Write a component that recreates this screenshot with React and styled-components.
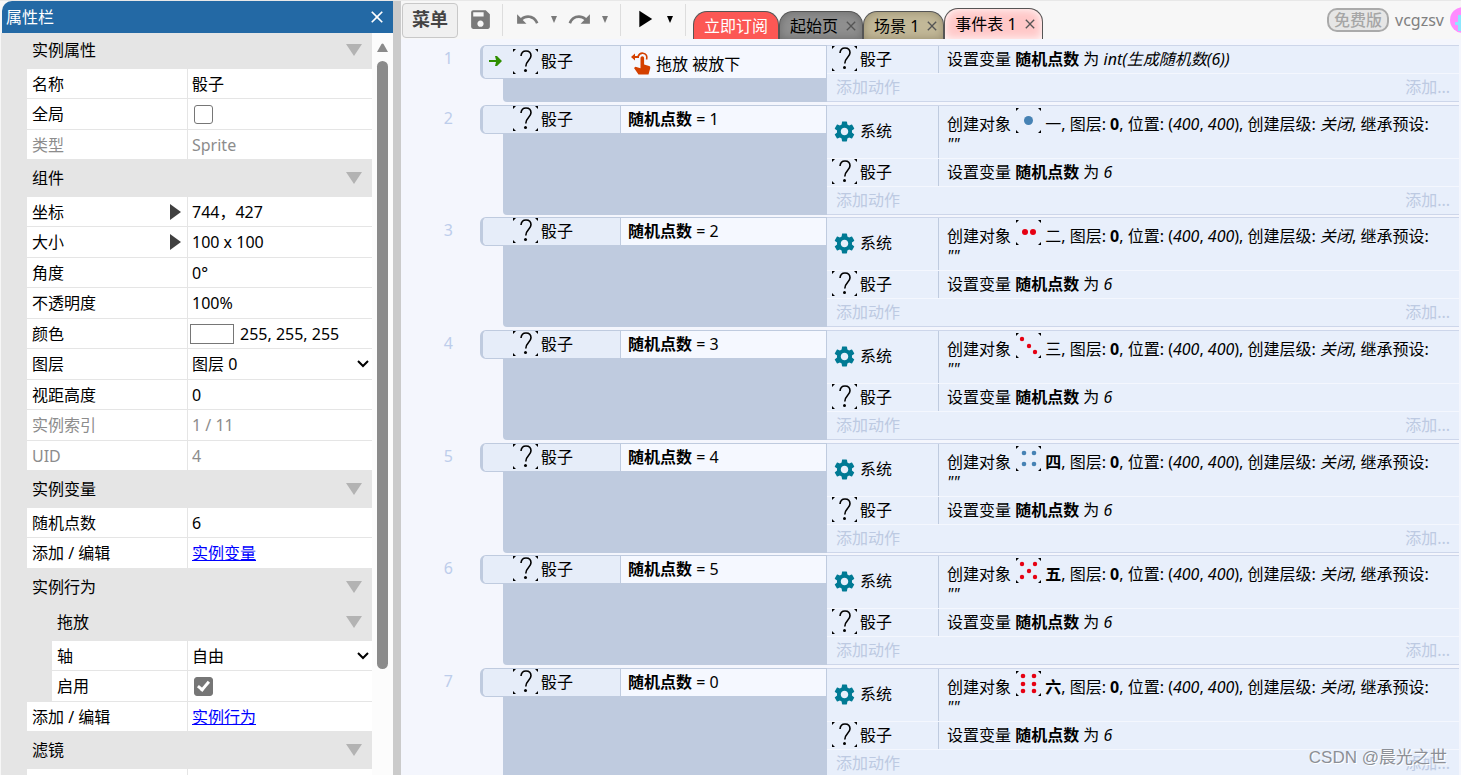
import React from 'react'
import styled, { createGlobalStyle } from 'styled-components'
import { MdClose, MdPlayArrow, MdRedo, MdSave, MdSettings, MdUndo } from 'react-icons/md'

const GlobalStyle = createGlobalStyle`
    * { box-sizing: border-box; }
    html, body, #root { height: 100%; }
    body {
        margin: 0;
        overflow: hidden;
        background: #f7f7f7;
        color: #000;
        font-family: "Noto Sans", "Noto Sans CJK SC", sans-serif;
        font-size: 16px;
        line-height: 20px;
    }
    button, input, select { font: inherit; color: inherit; }
`

const sections = [
    {
        title: '实例属性',
        rows: [
            { label: '名称', value: '骰子' },
            { label: '全局', type: 'check' },
            { label: '类型', value: 'Sprite', muted: true },
        ],
    },
    {
        title: '组件',
        rows: [
            { label: '坐标', value: '744，427', expand: true },
            { label: '大小', value: '100 x 100', expand: true },
            { label: '角度', value: '0°' },
            { label: '不透明度', value: '100%' },
            { label: '颜色', value: '255, 255, 255', type: 'color' },
            { label: '图层', value: '图层 0', type: 'select' },
            { label: '视距高度', value: '0' },
            { label: '实例索引', value: '1 / 11', muted: true },
            { label: 'UID', value: '4', muted: true },
        ],
    },
    {
        title: '实例变量',
        rows: [
            { label: '随机点数', value: '6' },
            { label: '添加 / 编辑', value: '实例变量', type: 'link' },
        ],
    },
    {
        title: '实例行为',
        sub: '拖放',
        rows: [
            { label: '轴', value: '自由', type: 'select', nested: true },
            { label: '启用', type: 'check', checked: true, nested: true },
            { label: '添加 / 编辑', value: '实例行为', type: 'link' },
        ],
    },
    {
        title: '滤镜',
        rows: [{ label: '', type: 'empty' }],
    },
]

const RED = '#e60012'
const BLUE = '#4682b4'

const faces = [
    { name: '一', color: BLUE, r: 4.5, dots: [[12.5, 12.5]] },
    { name: '二', color: RED, r: 3, dots: [[9, 12], [17, 12]] },
    { name: '三', color: RED, r: 2.2, dots: [[6, 6], [13, 13], [19, 19]] },
    { name: '四', color: BLUE, r: 2.3, bold: true, dots: [[8, 7], [18, 7], [8, 18], [18, 18]] },
    { name: '五', color: RED, r: 2.2, bold: true, dots: [[6, 6], [19, 6], [13, 13], [6, 19], [19, 19]] },
    { name: '六', color: RED, r: 2.3, bold: true, dots: [[7, 5], [18, 5], [7, 13], [18, 13], [7, 20], [18, 20]] },
]

/* ---------- icons ---------- */

function Corners() {
    return <path d="M0 0h3l-3 3zM25 0v3l-3-3zM0 25v-3l3 3zM25 25h-3l3-3z" fill="#000" />
}

function SpriteIcon() {
    return (
        <IconBox viewBox="0 0 25 25" aria-hidden="true">
            <Corners />
            <path d="M8 7C8.300 3.600 10.300 2 13 2c3 0 5 2 5 4.800 0 4.200-5.200 5-5.200 10.700" fill="none" stroke="#000" strokeWidth="1.600" />
            <circle cx="12.500" cy="21.500" r="1.500" />
        </IconBox>
    )
}

function FaceIcon({ face }) {
    return (
        <FaceBox viewBox="0 0 25 25" aria-hidden="true">
            <Corners />
            {face.dots.map(([x, y]) => (
                <circle key={`${x}-${y}`} cx={x} cy={y} r={face.r} fill={face.color} />
            ))}
        </FaceBox>
    )
}

function DragIcon() {
    return (
        <TouchIcon viewBox="0 0 20 23" aria-hidden="true">
            <path d="M9.500 6a1.800 1.800 0 0 1 3.600 0v6.500l5 1.500c1 .4 1.300 1 1.200 2l-1.800 6.500H7.500L3 16l1.500-1.300 5 1.600z" fill="#d44000" />
            <path d="M7 4.600C8 2 10 1 12 1.200c3 .3 4.500 3 3.500 6.300" fill="none" stroke="#d44000" strokeWidth="1.600" />
            <path d="M0 5l4-3.500V4h4v2H4v2.500z" fill="#d44000" />
        </TouchIcon>
    )
}

function Caret() {
    return <svg width="6" height="7" viewBox="0 0 6 7" aria-hidden="true"><path d="M0 0h6L3 7z" fill="currentColor" /></svg>
}

/* ---------- properties bar ---------- */

function Value({ row }) {
    const { label, value, type, checked } = row
    if (type === 'empty') return null
    if (type === 'check') return <Check type="checkbox" aria-label={label} defaultChecked={checked} />
    if (type === 'link') return <Link href="#">{value}</Link>
    if (type === 'select') {
        return (
            <SelectWrap>
                <Select aria-label={label}><option>{value}</option></Select>
                <svg width="12" height="8" viewBox="0 0 12 8" aria-hidden="true"><path d="M1 1l5 5 5-5" fill="none" stroke="#000" strokeWidth="2" /></svg>
            </SelectWrap>
        )
    }
    if (type === 'color') return <><Swatch aria-label={label} />{value}</>
    return <TextInput aria-label={label} defaultValue={value} disabled={row.muted} />
}

function Heading({ children, nested }) {
    return (
        <SectionHead $nested={nested}>
            {children}
            <svg width="16" height="12" viewBox="0 0 16 12" aria-hidden="true"><path d="M0 0h16L8 12z" fill="#b3b3b3" /></svg>
        </SectionHead>
    )
}

function PropertiesBar() {
    return (
        <Panel>
            <PanelTitle>
                属性栏
                <CloseButton aria-label="关闭"><MdClose size={20} /></CloseButton>
            </PanelTitle>
            <PanelBody>
                <Sections>
                    {sections.map((section) => (
                        <Section key={section.title}>
                            <Heading>{section.title}</Heading>
                            {section.sub && <Heading nested>{section.sub}</Heading>}
                            <Rows>
                                {section.rows.map((row) => (
                                    <Row key={row.label} $nested={row.nested} $muted={row.muted}>
                                        <Label>
                                            {row.label}
                                            {row.expand && <svg width="11" height="16" viewBox="0 0 11 16" aria-hidden="true"><path d="M0 0l11 8-11 8z" fill="#404040" /></svg>}
                                        </Label>
                                        <Cell><Value row={row} /></Cell>
                                    </Row>
                                ))}
                            </Rows>
                        </Section>
                    ))}
                </Sections>
                <ScrollTrack>
                    <svg width="11" height="9" viewBox="0 0 11 9" aria-hidden="true"><path d="M4.500 1q1-1.200 2 0L11 9H0z" fill="#8b8b8b" /></svg>
                    <ScrollThumb />
                </ScrollTrack>
            </PanelBody>
        </Panel>
    )
}

/* ---------- toolbar ---------- */

function Toolbar() {
    return (
        <Bar>
            <MenuButton>菜单</MenuButton>
            <ToolButton aria-label="保存" $w={44}><MdSave size={25} /></ToolButton>
            <Separator />
            <ToolButton aria-label="撤销" $w={48}><MdUndo size={25} /></ToolButton>
            <ToolButton aria-label="撤销历史" $w={6}><Caret /></ToolButton>
            <ToolButton aria-label="重做" $w={45}><MdRedo size={25} /></ToolButton>
            <ToolButton aria-label="重做历史" $w={6}><Caret /></ToolButton>
            <Gap />
            <Separator />
            <ToolButton aria-label="预览" $w={46} $dark><MdPlayArrow size={28} /></ToolButton>
            <ToolButton aria-label="预览选项" $w={6} $dark><Caret /></ToolButton>
            <Gap />
            <Separator />
            <Tabs>
                <Tab $bg="#fc5855" $glow="#fc5855" $color="#fff">立即订阅</Tab>
                <Tab $bg="#8f8f8f" $glow="#6c6c6c">起始页<MdClose size={16} color="#555" /></Tab>
                <Tab $bg="#c2b898" $glow="#968c6e">场景 1<MdClose size={16} color="#555" /></Tab>
                <Tab $bg="#ffc8c8" $glow="#fff" $active>事件表 1<MdClose size={16} color="#555" /></Tab>
            </Tabs>
            <Account>
                <Badge>免费版</Badge>
                vcgzsv
                <Avatar viewBox="0 0 26 26" aria-hidden="true">
                    <circle cx="13" cy="13" r="13" fill="#ff8cff" />
                    <path d="M8 8h12v16H8v-6H5v-3h3z" fill="#8ce6ff" />
                </Avatar>
            </Account>
        </Bar>
    )
}

/* ---------- event sheet ---------- */

function SetVariable({ children }) {
    return (
        <Action>
            <ActionObject><SpriteIcon />骰子</ActionObject>
            <ActionText>设置变量 <b>随机点数</b> 为 <i>{children}</i></ActionText>
        </Action>
    )
}

function AddAction() {
    return <AddRow><AddButton>添加动作</AddButton><AddButton>添加...</AddButton></AddRow>
}

function EventSheet() {
    return (
        <Sheet>
            <Event>
                <Num>1</Num>
                <Conditions>
                    <Condition $tall>
                        <ConditionObject>
                            <svg width="13" height="10" viewBox="0 0 13 10" aria-hidden="true"><path d="M0 4h7L6 0h2l5 5-5 5H6l1-4H0z" fill="#2f8f00" /></svg>
                            <SpriteIcon />骰子
                        </ConditionObject>
                        <ConditionText $tall><DragIcon />拖放 被放下</ConditionText>
                    </Condition>
                    <Filler />
                </Conditions>
                <Actions>
                    <SetVariable>int(生成随机数(6))</SetVariable>
                    <AddAction />
                </Actions>
            </Event>
            {faces.map((face, i) => (
                <Event key={face.name}>
                    <Num>{i + 2}</Num>
                    <Conditions>
                        <Condition>
                            <ConditionObject><SpriteIcon />骰子</ConditionObject>
                            <ConditionText><span><b>随机点数</b> = {(i + 1) % 6}</span></ConditionText>
                        </Condition>
                        <Filler />
                    </Conditions>
                    <Actions>
                        <Action $tall>
                            <ActionObject><GearBox><MdSettings size={25} /></GearBox>系统</ActionObject>
                            <ActionText>
                                创建对象 <FaceIcon face={face} /><FaceName $bold={face.bold}>{face.name}</FaceName>, 图层: <b>0</b>, 位置: (<i>400</i>, <i>400</i>), 创建层级: <i>关闭</i>, 继承预设: <i>""</i>
                            </ActionText>
                        </Action>
                        <SetVariable>6</SetVariable>
                        <AddAction />
                    </Actions>
                </Event>
            ))}
        </Sheet>
    )
}

function App() {
    return (
        <Page>
            <GlobalStyle />
            <PropertiesBar />
            <Splitter />
            <Main>
                <Toolbar />
                <EventSheet />
            </Main>
            <Watermark>CSDN @晨光之世</Watermark>
        </Page>
    )
}

const Page = styled.div`
    display: flex;
    height: 100vh;
    border-top: 1px solid #e8e8e8;
    overflow: hidden;
`

const Panel = styled.aside`
    display: flex;
    flex-direction: column;
    flex: none;
    width: 393px;
    padding-left: 1px;
`

const PanelTitle = styled.header`
    display: flex;
    align-items: center;
    justify-content: space-between;
    flex: none;
    height: 32px;
    margin-left: 1px;
    padding: 0 6px 0 4px;
    border-radius: 10px 0 0 0;
    background: #2369a5;
    color: #fff;
`

const CloseButton = styled.button`
    display: flex;
    padding: 0;
    border: 0;
    background: none;
`

const PanelBody = styled.div`
    display: flex;
    flex: 1;
    min-height: 0;
    overflow: hidden;
    background: #e5e5e5;
`

const Sections = styled.div`
    flex: 1;
    padding-left: 26px;
`

const SectionHead = styled.h2`
    display: flex;
    align-items: center;
    justify-content: space-between;
    height: ${({ $nested }) => ($nested ? 35 : 37)}px;
    margin: 0;
    padding: 0 10px ${({ $nested }) => ($nested ? '4px 30px' : '2px 5px')};
    font-size: 16px;
    font-weight: 400;
`

const Section = styled.section`
    &:first-child ${SectionHead} {
        height: 36px;
    }
`

const Rows = styled.div``

const Row = styled.div`
    display: flex;
    height: 30px;
    margin-left: ${({ $nested }) => ($nested ? 25 : 0)}px;
    border-bottom: 1px solid #e5e5e5;
    background: #fff;
    color: ${({ $muted }) => ($muted ? '#8c8c8c' : '#000')};
    &:nth-child(even) {
        height: 31px;
    }
`

const Label = styled.div`
    display: flex;
    flex: 1;
    align-items: center;
    justify-content: space-between;
    padding: 0 6px 0 5px;
`

const Cell = styled.div`
    display: flex;
    align-items: center;
    flex: none;
    width: 185px;
    padding-left: 3px;
    border-left: 1px solid #e5e5e5;
`

const TextInput = styled.input`
    width: 100%;
    padding: 0 1px;
    border: 0;
    outline: 0;
    background: none;
`

const Check = styled.input`
    appearance: none;
    width: 19px;
    height: 19px;
    margin: 0 3px;
    border: 1px solid #767676;
    border-radius: 3px;
    background: #fff;
    &:checked {
        background: #767676;
    }
    &:checked::after {
        content: '';
        display: block;
        width: 4px;
        height: 9px;
        margin: 1px 0 0 5px;
        border: solid #fff;
        border-width: 0 3px 3px 0;
        transform: rotate(40deg);
    }
`

const Link = styled.a`
    margin-left: 1px;
    color: #00f;
`

const SelectWrap = styled.div`
    display: flex;
    flex: 1;
    align-items: center;
    padding-right: 3px;
`

const Select = styled.select`
    flex: 1;
    appearance: none;
    padding: 0 1px;
    border: 0;
    background: none;
`

const Swatch = styled.button`
    width: 44px;
    height: 20px;
    margin: 0 6px 0 -1px;
    border: 1px solid #767676;
    background: #fff;
`

const ScrollTrack = styled.div`
    display: flex;
    flex-direction: column;
    align-items: center;
    gap: 9px;
    width: 21px;
    padding-top: 10px;
    background: #fcfcfc;
`

const ScrollThumb = styled.div`
    width: 11px;
    height: 83%;
    border-radius: 6px;
    background: #8b8b8b;
`

const Splitter = styled.div`
    flex: none;
    width: 8px;
    background: #cbcbcb;
`

const Main = styled.main`
    display: flex;
    flex: 1;
    flex-direction: column;
    min-width: 0;
`

const Bar = styled.div`
    display: flex;
    flex: none;
    align-items: center;
    height: 38px;
    padding-left: 1px;
    overflow: hidden;
    background: #f7f7f7;
`

const MenuButton = styled.button`
    width: 56px;
    height: 35px;
    padding: 0 0 2px;
    border: 1px solid #c8c8c8;
    border-radius: 4px;
    background: #f0f0f0;
    color: #444;
    font-size: 18px;
    font-weight: 700;
`

const ToolButton = styled.button`
    display: flex;
    align-items: center;
    justify-content: center;
    width: ${({ $w }) => $w}px;
    height: 34px;
    padding: 0 0 2px;
    border: 0;
    background: none;
    color: ${({ $dark }) => ($dark ? '#000' : '#7a7a7a')};
`

const Separator = styled.div`
    width: 1px;
    height: 32px;
    background: #ddd;
`

const Gap = styled.div`
    width: 12px;
`

const Tabs = styled.div`
    display: flex;
    align-self: stretch;
    align-items: flex-end;
    margin-left: 7px;
`

const Tab = styled.button`
    display: flex;
    align-items: center;
    gap: 5px;
    height: ${({ $active }) => ($active ? 31 : 28)}px;
    padding: 0 ${({ $active }) => ($active ? 4 : 3)}px 0 10px;
    border: 1px solid #555;
    border-bottom: 0;
    border-radius: 14px 14px 0 0;
    background: ${({ $bg }) => $bg};
    box-shadow: inset 0 0 10px ${({ $glow }) => $glow};
    color: ${({ $color }) => $color || '#000'};
    &:first-child {
        padding-right: 10px;
    }
`

const Account = styled.div`
    display: flex;
    align-items: center;
    flex: none;
    gap: 6px;
    margin-left: auto;
    margin-right: -15px;
    color: #808080;
`

const Badge = styled.span`
    padding: 0 5px;
    border: 2px solid #aaa;
    border-radius: 10px;
    background: #e6e6e6;
    color: #a6a6a6;
    font-weight: 500;
`

const Avatar = styled.svg`
    width: 26px;
    height: 26px;
`

const Sheet = styled.div`
    flex: 1;
    min-height: 0;
    padding: 6px 2px 0 0;
    overflow: hidden;
    background: #f4f6fd;
`

const Event = styled.div`
    display: flex;
    margin-bottom: 3px;
    &:nth-child(3n + 2) {
        margin-bottom: 2px;
    }
`

const Num = styled.div`
    flex: none;
    width: 79px;
    padding: 3px 27px 0 0;
    color: #bdcdeb;
    text-align: right;
`

const Conditions = styled.div`
    display: flex;
    flex: none;
    flex-direction: column;
    width: 347px;
`

const Condition = styled.div`
    display: flex;
    height: ${({ $tall }) => ($tall ? 34 : 29)}px;
    border: 1px solid #bfcbdf;
    border-width: 1px 1px 1px 3px;
    border-radius: 6px 0 0 6px;
    overflow: hidden;
`

const ConditionObject = styled.div`
    display: flex;
    align-items: center;
    justify-content: flex-end;
    gap: 3px;
    flex: none;
    width: 138px;
    padding: 0 47px 2px 0;
    border-right: 1px solid #bfcbdf;
    background: #e6edf9;
    > svg:first-child:not(:only-of-type) {
        margin-right: auto;
        margin-left: 6px;
    }
`

const ConditionText = styled.div`
    display: flex;
    flex: 1;
    align-items: center;
    gap: 5px;
    padding: ${({ $tall }) => ($tall ? '3px 0 0 10px' : '0 0 2px 7px')};
    background: #f5f8ff;
`

const Filler = styled.div`
    flex: 1;
    margin-left: 23px;
    border-radius: 0 0 0 4px;
    background: #bfcbdf;
`

const Actions = styled.div`
    flex: 1;
    min-width: 0;
    border: solid #cdd6ea;
    border-width: 1px 0;
    background: #e8effb;
`

const Action = styled.div`
    display: flex;
    height: ${({ $tall }) => ($tall ? 53 : 28)}px;
    border-bottom: 1px solid #f4f7fe;
`

const ActionObject = styled.div`
    display: flex;
    align-items: center;
    gap: 3px;
    flex: none;
    width: 112px;
    padding: 0 0 2px 5px;
    border-right: 1px solid #bfcbdf;
`

const ActionText = styled.div`
    flex: 1;
    align-self: center;
    padding: 0 20px 2px 8px;
`

const AddRow = styled.div`
    display: flex;
    align-items: center;
    justify-content: space-between;
    height: 27px;
    padding: 0 9px 2px;
`

const AddButton = styled.button`
    padding: 0;
    border: 0;
    background: none;
    color: #bdcae2;
`

const IconBox = styled.svg`
    flex: none;
    width: 25px;
    height: 25px;
`

const FaceBox = styled(IconBox)`
    margin-left: 1px;
    vertical-align: -3px;
`

const TouchIcon = styled.svg`
    width: 20px;
    height: 23px;
`

const GearBox = styled.span`
    display: flex;
    color: #007a94;
`

const FaceName = styled.span`
    margin-left: 4px;
    font-weight: ${({ $bold }) => ($bold ? 700 : 400)};
`

// sits over the sheet in the bottom corner
const Watermark = styled.div`
    position: absolute;
    right: 14px;
    bottom: 7px;
    color: #8c8f96;
    text-shadow: 1px 1px 0 #fff;
    font-family: "Liberation Sans", "Noto Sans CJK SC", sans-serif;
    font-size: 17px;
`

export default App
